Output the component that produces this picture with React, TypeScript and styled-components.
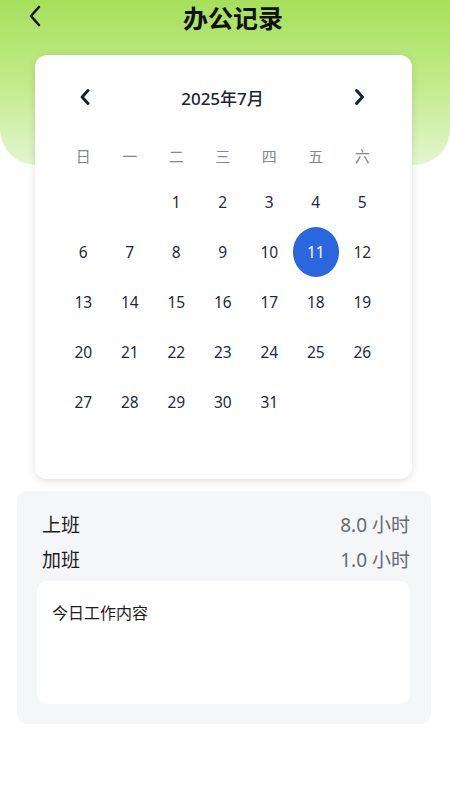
import React from "react";
import styled, { createGlobalStyle } from "styled-components";

const Global = createGlobalStyle`
  body {
    margin: 0;
    background: #ffffff;
    font-family: "Noto Sans", "Noto Sans CJK SC", sans-serif;
  }
  * { box-sizing: border-box; }
`;

const Page = styled.div`
  width: 450px;
  min-height: 800px;
  background: #fff;
`;

const HeaderBg = styled.div`
  height: 165px;
  background: linear-gradient(180deg, #a6e05a 0%, #c4ec90 55%, #e4f6cf 100%);
  border-radius: 0 0 36px 36px;
`;

const NavBar = styled.div`
  height: 34px;
  display: flex;
  align-items: center;
  justify-content: center;
  position: relative;
  padding-left: 16px;
`;

const BackBtn = styled.button`
  position: absolute;
  left: 24px;
  top: 4px;
  width: 22px;
  height: 24px;
  padding: 0;
  border: none;
  background: none;
  display: flex;
  align-items: center;
  justify-content: center;
`;

const Title = styled.h1`
  margin: 0;
  font-family: "Noto Sans CJK SC", sans-serif;
  font-size: 25px;
  font-weight: 700;
  color: #111;
  line-height: 34px;
`;

const Card = styled.div`
  position: relative;
  margin: -110px 38px 0 35px;
  background: #fff;
  border-radius: 12px;
  box-shadow: 0 2px 8px rgba(0, 0, 0, 0.12);
  padding: 24px 27px 52px 25px;
`;

const MonthBar = styled.div`
  display: flex;
  align-items: center;
  justify-content: space-between;
  height: 36px;
  padding: 0 18px 0 18px;
`;

const MonthLabel = styled.div`
  font-family: "Noto Sans", "Noto Sans CJK SC", sans-serif;
  font-size: 17px;
  font-weight: 500;
  color: #1c2536;
`;

const ArrowBtn = styled.button`
  border: none;
  background: none;
  padding: 0;
  width: 14px;
  height: 18px;
  display: flex;
  align-items: center;
  justify-content: center;
`;

const Grid = styled.div`
  display: grid;
  grid-template-columns: repeat(7, 46.5px);
`;

const WeekCell = styled.div`
  height: 44px;
  margin-top: 18px;
  display: flex;
  align-items: center;
  justify-content: center;
  font-family: "Noto Sans CJK SC", sans-serif;
  font-size: 15px;
  color: #85888e;
`;

const DayCell = styled.div`
  height: 50px;
  display: flex;
  align-items: center;
  justify-content: center;
`;

const DayNum = styled.span<{ $active?: boolean }>`
  width: 50px;
  height: 50px;
  border-radius: 50%;
  display: flex;
  align-items: center;
  justify-content: center;
  font-family: "Noto Sans", sans-serif;
  font-size: 15.5px;
  color: ${(p) => (p.$active ? "#ffffff" : "#1f2a3c")};
  background: ${(p) => (p.$active ? "#2a67de" : "transparent")};
`;

const Panel = styled.div`
  margin: 12px 19px 0 17px;
  background: #f5f6f8;
  border-radius: 10px;
  padding: 15px 21px 20px 20px;
`;

const Row = styled.div`
  display: flex;
  justify-content: space-between;
  align-items: center;
  height: 35px;
  padding: 0 0 0 5px;
`;

const Label = styled.span`
  font-family: "Noto Sans CJK SC", sans-serif;
  font-size: 19px;
  color: #1d1d1d;
`;

const Value = styled.span`
  font-family: "Noto Sans", "Noto Sans CJK SC", sans-serif;
  font-size: 19px;
  color: #666a70;
`;

const NoteBox = styled.div`
  margin-top: 5px;
  background: #fff;
  border-radius: 10px;
  height: 123px;
  padding: 19px 15px;
  font-family: "Noto Sans CJK SC", sans-serif;
  font-size: 16px;
  color: #1d1d1d;
`;

const Chevron: React.FC<{ dir: "left" | "right"; size?: number; w?: number }> = ({ dir, size = 16, w = 2.8 }) => (
  <svg width={size * 0.6} height={size} viewBox="0 0 9 15" fill="none">
    <path
      d={dir === "left" ? "M7.5 1.5 L2 7.5 L7.5 13.5" : "M1.5 1.5 L7 7.5 L1.5 13.5"}
      stroke="#17202e"
      strokeWidth={w}
      strokeLinecap="round"
      strokeLinejoin="round"
    />
  </svg>
);

const weekdays = ["日", "一", "二", "三", "四", "五", "六"];

export default function App() {
  const firstOffset = 2;
  const cells: (number | null)[] = [];
  for (let i = 0; i < firstOffset; i++) cells.push(null);
  for (let d = 1; d <= 31; d++) cells.push(d);
  const selected = 11;

  return (
    <Page>
      <Global />
      <HeaderBg>
        <NavBar>
          <BackBtn>
            <svg width="14" height="22" viewBox="0 0 14 22" fill="none">
              <path d="M11 2 L3 11 L11 20" stroke="#111" strokeWidth="2.6" strokeLinecap="round" strokeLinejoin="round" />
            </svg>
          </BackBtn>
          <Title>办公记录</Title>
        </NavBar>
      </HeaderBg>
      <Card>
        <MonthBar>
          <ArrowBtn><Chevron dir="left" /></ArrowBtn>
          <MonthLabel>2025年7月</MonthLabel>
          <ArrowBtn><Chevron dir="right" /></ArrowBtn>
        </MonthBar>
        <Grid>
          {weekdays.map((w) => (
            <WeekCell key={w}>{w}</WeekCell>
          ))}
          {cells.map((d, i) => (
            <DayCell key={i}>
              {d !== null && <DayNum $active={d === selected}>{d}</DayNum>}
            </DayCell>
          ))}
        </Grid>
      </Card>
      <Panel>
        <Row>
          <Label>上班</Label>
          <Value>8.0 小时</Value>
        </Row>
        <Row>
          <Label>加班</Label>
          <Value>1.0 小时</Value>
        </Row>
        <NoteBox>今日工作内容</NoteBox>
      </Panel>
    </Page>
  );
}
